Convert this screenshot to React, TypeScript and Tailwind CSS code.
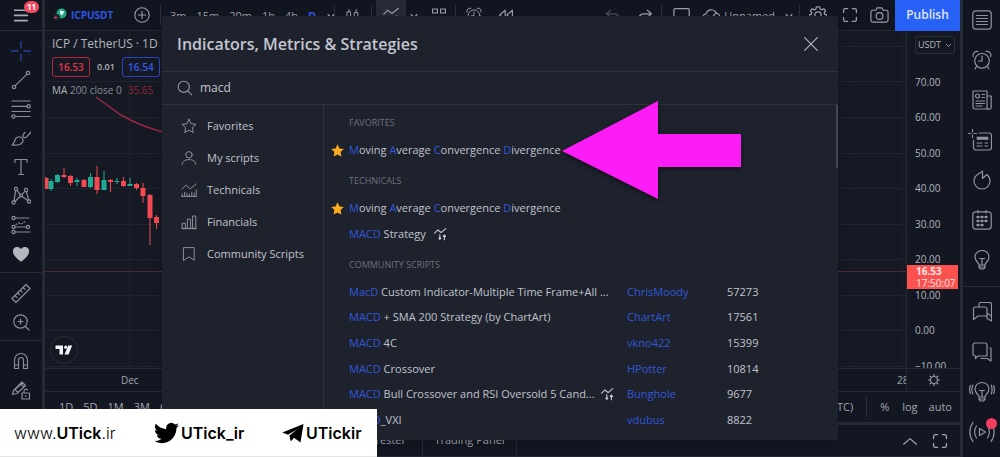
import React from "react";

type IconProps = { size?: number; className?: string; children: React.ReactNode };

function Icon({ size = 20, className = "", children }: IconProps) {
  return (
    <svg
      width={size}
      height={size}
      viewBox="0 0 20 20"
      fill="none"
      stroke="currentColor"
      strokeWidth="1.2"
      strokeLinecap="round"
      strokeLinejoin="round"
      aria-hidden="true"
      className={"shrink-0 " + className}
    >
      {children}
    </svg>
  );
}

const Cross = () => (
  <Icon className="text-[#27409a]">
    <path d="M10 0.5v6.5M10 13v6.5M0.5 10h6.5M13 10h6.5" strokeWidth="1.4" />
  </Icon>
);
const TrendLine = () => (
  <Icon>
    <circle cx="3" cy="17" r="1.7" />
    <circle cx="17" cy="3" r="1.7" />
    <path d="M4.3 15.7L15.7 4.3" />
  </Icon>
);
const FibLines = () => (
  <Icon>
    <path d="M1 2h18M1 7.3h15M1 12.5h18M4.5 17.5H19" />
    <circle cx="17.7" cy="7.3" r="1.6" fill="#11151f" />
    <circle cx="2.5" cy="17.5" r="1.6" fill="#11151f" />
  </Icon>
);
const Brush = () => (
  <Icon>
    <path d="M1 17c2-1.500 2.500-3 3-5 .8-2.500 3.500-4 6-2.800 2 1 2.800 3.500 1.200 5.500C9.500 17 5 17.500 1 17z" />
    <path d="M12 7c-.5 2 1.500 3.500 3.200 2.300L20 4M12.500 6l1.500-1.500" />
  </Icon>
);
const TextTool = () => (
  <Icon>
    <path d="M4 5.500V2.500h12v3M10 2.500v15M7.500 17.500h5" />
  </Icon>
);
const Pattern = () => (
  <Icon>
    <circle cx="5" cy="3" r="1.6" />
    <circle cx="15" cy="4" r="1.600" />
    <circle cx="2.500" cy="16.500" r="1.600" />
    <circle cx="18" cy="15.500" r="1.600" />
    <circle cx="10" cy="9.500" r="1.400" />
    <path d="M4.600 4.700L3 14.800M6 4.400l3 4M14 5.400l-3 3M15.400 5.600l2.200 8.200M4 15.500l5-5M11.200 10.400l5.500 4.200" />
  </Icon>
);
const Forecast = () => (
  <Icon>
    <path d="M4 3h14M4 12h11M4 17h15" />
    <path d="M5 9.500l3-1.500 2 1 5-3" strokeDasharray="1 2" />
    <circle cx="2.500" cy="3" r="1.600" />
    <circle cx="2.500" cy="12" r="1.600" />
    <circle cx="17" cy="12" r="1.600" />
    <circle cx="2.500" cy="17" r="1.600" />
  </Icon>
);
const Heart = () => (
  <Icon className="text-[#b4b7c0]">
    <path
      d="M10 17C6 14 2.500 11 2.500 7.500 2.500 5 4.300 3.500 6.300 3.500 8 3.500 9.300 4.500 10 6c.7-1.500 2-2.500 3.700-2.500 2 0 3.800 1.500 3.800 4C17.500 11 14 14 10 17z"
      fill="currentColor"
    />
  </Icon>
);
const Ruler = () => (
  <Icon>
    <path d="M1 15.500L15 1.500l4 4L5 19.500z" />
    <path d="M4 12.700l1.800 1.800M6.700 10l1.800 1.800M9.400 7.300l1.800 1.800M12.100 4.600l1.800 1.800" />
  </Icon>
);
const ZoomIn = () => (
  <Icon>
    <circle cx="9.500" cy="9.500" r="6.700" />
    <path d="M14.500 14.500l3.500 3.500M9.500 7v5M7 9.500h5" />
  </Icon>
);
const Magnet = () => (
  <Icon>
    <path d="M3.500 17.500V9a6.500 6.500 0 0113 0v8.500h-4V9a2.500 2.500 0 00-5 0v8.500zM3.500 14h4M12.500 14h4" />
  </Icon>
);
const PencilLock = () => (
  <Icon>
    <path d="M1.500 14.500l1-4L11 2l3.500 3.500-8.500 8zM9.500 3.500L13 7M4 9.500l3 3M5 8.500l6-5" />
    <path d="M11 13h7.500v6H11zM13 13v-2a2 2 0 013.500-1.200M14.800 15.500v1" />
  </Icon>
);

const ListIcon = () => (
  <Icon>
    <rect x="0.800" y="0.800" width="18.400" height="18.400" rx="3" />
    <path d="M4.500 5.500h11M4.500 8.500h11M4.500 11.500h11M4.500 14.500h11" />
  </Icon>
);
const Alarm = ({ size = 20 }: { size?: number }) => (
  <Icon size={size}>
    <circle cx="10" cy="10.800" r="7.300" />
    <path d="M10 6v5H6.500M1.200 6.500A4 4 0 016 1.500M18.800 6.500A4 4 0 0014 1.500M4.500 16.500L3 19M15.500 16.500L17 19" />
  </Icon>
);
const News = () => (
  <Icon>
    <path d="M1 1h14v18H3a2 2 0 01-2-2zM15 6h4.200v11.200a2 2 0 01-4.200 0" />
    <circle cx="5.500" cy="6" r="2" />
    <path d="M10 4.500h2.500M10 7.500h2.500M4 11h8.500M4 13.500h8.500M4 16h6" />
  </Icon>
);
const NewList = () => (
  <svg
    width="24"
    height="22"
    viewBox="-4 -2 24 22"
    fill="none"
    stroke="currentColor"
    strokeWidth="1.2"
    strokeLinecap="round"
    aria-hidden="true"
    className="mr-1"
  >
    <path d="M0.500 -1.500v2.500M0.500 4v2.500M-3.500 2.500h2.500M2 2.500h2.500M7 2h10a2.500 2.500 0 012.500 2.500v12A2.500 2.500 0 0117 19H4a2.500 2.500 0 01-2.500-2.500V9" />
    <rect x="5" y="6" width="11" height="2.500" fill="currentColor" strokeWidth="0.600" />
    <path d="M5 12h5M5 15h5M13 12h2.500M13 15h2.500" />
  </svg>
);
const Flame = () => (
  <Icon>
    <path d="M10.500 1v7.500L14.800 4.500C17.300 6.500 18 8.800 18 11A8 8 0 012 11C2 7.500 3.800 5.500 6 4.200 8 3 9.800 2.500 10.500 1z" />
  </Icon>
);
const CalendarIcon = () => (
  <Icon>
    <rect x="0.800" y="1.800" width="18.400" height="17.400" rx="3" />
    <path d="M6 0v3M14 0v3" />
    <path d="M5.500 7h1M9.500 7h1M13.500 7h1M5.500 11h1M9.500 11h1M13.500 11h1M5.500 15h1M9.500 15h1" strokeWidth="2.400" />
  </Icon>
);
const bulbPath =
  "M7 15c0-2.500-4-3.500-4-8a7 6.500 0 0114 0c0 4.500-4 5.500-4 8zM7 15v2.500l1.500 1.500h3l1.500-1.500V15M7 17h6M10 15V9M7.500 8.500h5";
const Bulb = () => (
  <Icon>
    <path d={bulbPath} />
  </Icon>
);
const BulbWaves = () => (
  <svg
    width="26"
    height="22"
    viewBox="-3 -1 26 22"
    fill="none"
    stroke="currentColor"
    strokeWidth="1.2"
    strokeLinecap="round"
    aria-hidden="true"
  >
    <path d={bulbPath} />
    <path d="M0.800 3c-1.200 3-1.200 6 0 9M-1.600 3.500c-1.200 3-1.200 5 0 8M19.200 3c1.200 3 1.200 6 0 9M21.600 3.500c1.200 3 1.200 5 0 8" />
  </svg>
);
const Chats = () => (
  <Icon>
    <path d="M7 5V2.500a2 2 0 012-2h8.500a2 2 0 012 2V14l-4-2.500" />
    <path d="M2.500 5H13a2 2 0 012 2v7H8l-2 0-4.500 3.500V7A2 2 0 012.500 5zM15 14v2.500l4.500 2.500v-5" />
  </Icon>
);
const Chat = () => (
  <Icon>
    <path d="M3 1h10a2 2 0 012 2v11H6l-2.500 2.500V14H3a2 2 0 01-2-2V3a2 2 0 012-2z" />
    <path d="M18 6h1v13l-4-2.500H9" />
  </Icon>
);
const Stream = () => (
  <svg
    width="26"
    height="22"
    viewBox="0 0 26 22"
    fill="none"
    stroke="currentColor"
    strokeWidth="1.2"
    strokeLinecap="round"
    strokeLinejoin="round"
    aria-hidden="true"
  >
    <path d="M10.500 7.500v7l6-3.500zM7.500 5c-2.500 3.500-2.500 8.500 0 12M4 1.500C-.2 7-.2 15 4 20.500M18.500 5c2.500 3.500 2.500 8.500 0 12M22 1.500c4.200 5.500 4.200 13.500 0 19" />
  </svg>
);
const FullScreen = ({ size = 16 }: { size?: number }) => (
  <Icon size={size}>
    <path
      d="M2 7V4a2 2 0 012-2h3M13 2h3a2 2 0 012 2v3M18 13v3a2 2 0 01-2 2h-3M7 18H4a2 2 0 01-2-2v-3"
      strokeWidth="1.600"
    />
  </Icon>
);
const Chevron = ({ size = 10, up = false }: { size?: number; up?: boolean }) => (
  <Icon size={size}>
    <path d={up ? "M2 14l8-7 8 7" : "M4 7l6 6 6-6"} strokeWidth={up ? "1.500" : "2.400"} />
  </Icon>
);
const StrategyIcon = () => (
  <Icon size={13} className="text-[#c9ccd4]">
    <path d="M1 8l5-5 5 4 7-6" strokeWidth="1.700" />
    <path d="M9 10v5M7.500 15.500L9 17.500l1.500-2zM16 18v-6M14.300 13l1.700-2.300 1.700 2.300z" strokeWidth="1.700" />
  </Icon>
);
const GoldStar = () => (
  <svg width="13" height="13" viewBox="0 0 20 20" fill="#ffab1f" aria-hidden="true">
    <path d="M10 0.500l3 6.300 6.700.9-4.900 4.700 1.200 6.900-6-3.300-6 3.300 1.200-6.900L.3 7.700 7 6.800z" />
  </svg>
);

const drawTools = [
  [
    ["Crosshair", Cross],
    ["Trend line", TrendLine],
    ["Fibonacci", FibLines],
    ["Brush", Brush],
    ["Text", TextTool],
    ["Patterns", Pattern],
    ["Forecast", Forecast],
    ["Favourite tools", Heart],
  ],
  [
    ["Measure", Ruler],
    ["Zoom in", ZoomIn],
  ],
  [
    ["Magnet", Magnet],
    ["Lock drawings", PencilLock],
  ],
] as [string, React.ComponentType][][];

function LeftToolbar() {
  return (
    <nav className="w-[45px] shrink-0 border-r-[3px] border-[#262a35] bg-[#11151f] text-[#8b8e98]">
      <div className="flex h-[31px] items-center justify-center border-b border-[#262a35]">
        <button aria-label="Menu" className="relative flex w-full justify-center text-[#a9acb5]">
          <Icon size={16}>
            <path d="M2 4h16M2 10.500h16M2 17h16" strokeWidth="2" />
          </Icon>
          <span className="absolute -top-[6px] left-6 flex h-3 w-[15px] items-center justify-center rounded-full bg-[#ef4a62] text-[8px] leading-[12px] font-bold text-white">
            11
          </span>
        </button>
      </div>
      {drawTools.map((group, i) => (
        <div key={i} className="border-b border-[#262a35] pt-[5px] pb-1 last:border-b-0">
          {group.map(([label, Glyph]) => (
            <button key={label} aria-label={label} className="flex h-[29px] w-full items-center justify-center">
              <Glyph />
            </button>
          ))}
        </div>
      ))}
    </nav>
  );
}

const sideTools = [
  [
    ["Watchlist", ListIcon],
    ["Alerts", Alarm],
    ["News", News],
    ["Data window", NewList],
    ["Hotlists", Flame],
    ["Calendar", CalendarIcon],
    ["My ideas", Bulb],
  ],
  [
    ["Public chats", Chats],
    ["Private chats", Chat],
    ["Ideas stream", BulbWaves],
    ["Streams", Stream],
  ],
] as [string, React.ComponentType][][];

function RightToolbar() {
  return (
    <nav className="w-10 shrink-0 border-l-[3px] border-[#262a35] bg-[#11151f] text-[#9093a0]">
      {sideTools.map((group, i) => (
        <div key={i} className="border-b border-[#262a35] pb-[6px] last:border-b-0 last:pt-[5px] last:pb-0">
          {group.map(([label, Glyph]) => (
            <button key={label} aria-label={label} className="relative flex h-10 w-full items-center justify-center">
              <Glyph />
              {label === "Streams" && (
                <span className="absolute top-[6px] right-[3px] h-[11px] w-[11px] rounded-full bg-[#f23f5f]" />
              )}
            </button>
          ))}
        </div>
      ))}
    </nav>
  );
}

const Divider = () => <span className="h-5 w-px bg-[#2a2e39]" />;

function TopBar() {
  return (
    <header className="flex h-[31px] shrink-0 items-center border-b border-[#262a35] bg-[#11151f] text-[11px] text-[#9a9da7]">
      <button className="flex w-[83px] items-center gap-1 pl-2 text-[10px] font-bold text-[#2f55e8]">
        <svg width="14" height="14" viewBox="0 0 14 14" aria-hidden="true">
          <circle cx="8.500" cy="5.500" r="5" fill="#1fa67f" />
          <path d="M7 2.500l4.500 1-2.500 4-2-2z" fill="#e8f5f0" />
          <circle cx="3.500" cy="9.500" r="3.500" fill="#22242e" />
          <path d="M1 9.500h3" stroke="#d5485e" strokeWidth="1.500" />
        </svg>
        ICPUSDT
      </button>
      <button aria-label="Compare" className="flex w-[27px] justify-center">
        <Icon size={16}>
          <circle cx="10" cy="10" r="9" strokeWidth="1.400" />
          <path d="M10 5.500v9M5.500 10h9" strokeWidth="1.400" />
        </Icon>
      </button>
      <span className="pl-[5px]" />
      <Divider />
      <div className="flex w-[173px] items-center gap-[10px] pt-[2px] pl-[9px]">
        <button>3m</button>
        <button>15m</button>
        <button>20m</button>
        <button>1h</button>
        <button>4h</button>
        <button className="font-bold text-[#2f55e8]">D</button>
        <Chevron />
      </div>
      <Divider />
      <button aria-label="Chart type" className="flex w-9 justify-center">
        <Icon size={16}>
          <path d="M3 6h4v10H3zM5 3v3M5 16v3M12 7h4v7h-4zM14 3v4M14 14v4" />
        </Icon>
      </button>
      <Divider />
      <button aria-label="Indicators" className="ml-1 flex h-full w-[30px] items-center justify-center bg-[#262a35]">
        <Icon size={16}>
          <path d="M1 9l5-5 5 4 8-6M1 17V13M6 17v-5M11 17v-4M17 17v-6" strokeWidth="1.500" />
        </Icon>
      </button>
      <span className="flex w-4 justify-center pt-[2px]">
        <Chevron />
      </span>
      <button aria-label="Templates" className="flex w-[33px] justify-center">
        <Icon size={16}>
          <path d="M2 2.500h6v5H2zM12 2.500h6v5h-6zM2 12h6v5H2zM12 12h6v5h-6z" strokeWidth="1.500" />
        </Icon>
      </button>
      <Divider />
      <button aria-label="Alert" className="flex w-9 justify-center">
        <Alarm size={16} />
      </button>
      <button aria-label="Replay" className="flex w-7 justify-center">
        <Icon size={16}>
          <path d="M9 4l-7 6 7 6zM18 4l-7 6 7 6z" strokeWidth="1.500" />
        </Icon>
      </button>
      <div className="ml-auto flex h-full items-center">
        <button aria-label="Undo" className="flex w-8 justify-center text-[#4a4d58]">
          <Icon size={16}>
            <path d="M7 4L2 8.500 7 13M2 8.500h9c4 0 6 2 7 5" strokeWidth="1.500" />
          </Icon>
        </button>
        <button aria-label="Redo" className="flex w-8 justify-center">
          <Icon size={16}>
            <path d="M13 4l5 4.500-5 4.500M18 8.500H9c-4 0-6 2-7 5" strokeWidth="1.500" />
          </Icon>
        </button>
        <Divider />
        <button aria-label="Layout" className="flex w-10 justify-center">
          <Icon size={18}>
            <rect x="1" y="3" width="17" height="15" rx="1.500" strokeWidth="1.400" />
          </Icon>
        </button>
        <button className="flex items-center gap-1 pt-[2px] text-[11px]">
          <Icon size={18}>
            <path d="M5 16a4 4 0 01-1-8C6 3 12 1 15.500 6M5 16h10a4.500 4.500 0 001-9M7 10l3 3 6-7" strokeWidth="1.300" />
          </Icon>
          Unnamed
          <span className="flex w-5 justify-center">
            <Chevron />
          </span>
        </button>
        <Divider />
        <button aria-label="Settings" className="flex w-9 justify-center">
          <Icon size={18}>
            <path d="M8.200 1h3.600l.6 2.500 1.800.8 2.200-1.300 2 2.500-1.500 2 .6 1.700L20 10v3l-3 1M8.200 1l-.6 2.500-1.800.8L3.600 3l-2 2.500 1.500 2-.6 1.700L0 10v3l3 1" strokeWidth="1.400" />
            <circle cx="10" cy="10" r="3.500" strokeWidth="1.400" />
          </Icon>
        </button>
        <button aria-label="Fullscreen" className="flex w-[27px] justify-center">
          <FullScreen />
        </button>
        <button aria-label="Snapshot" className="flex w-8 justify-center">
          <Icon size={19}>
            <path d="M1 6.500a2 2 0 012-2h3l1.500-2.500h5l1.500 2.500h3a2 2 0 012 2V15a2 2 0 01-2 2H3a2 2 0 01-2-2z" />
            <circle cx="10" cy="10.500" r="3.600" />
          </Icon>
        </button>
        <button className="h-[31px] w-[65px] bg-[#2861f5] text-xs font-semibold text-[#dfe5f8]">Publish</button>
      </div>
    </header>
  );
}

type Candle = [x: number, high: number, open: number, close: number, low: number, up: 0 | 1];

const candles: Candle[] = [
  [1, 146, 147, 158, 158, 0],
  [6, 148, 150, 158, 160, 1],
  [12.5, 143, 144, 151, 152, 1],
  [19, 137, 144, 146, 147, 0],
  [25.5, 144, 145, 152, 155, 0],
  [32, 147, 149, 151, 155, 1],
  [39, 148, 149, 156, 156, 0],
  [45.5, 142, 146, 156, 157, 1],
  [52, 135, 146, 159, 163, 0],
  [59, 140, 149, 159, 159, 1],
  [65.5, 148, 149, 151, 161, 0],
  [72, 147, 150, 151, 153, 1],
  [78.5, 146, 150, 155, 156, 0],
  [85, 147, 153, 155, 155, 1],
  [91.5, 152, 153, 157, 159, 0],
  [98, 152, 157, 165, 172, 0],
  [105, 163, 164, 187, 214, 0],
  [111.5, 184, 186, 192, 198, 0],
];

const gridLevels = [15, 50, 86, 122, 157, 193, 228, 264, 299, 335];
const prices = ["70.00", "60.00", "50.00", "40.00", "30.00", "20.00", "10.00", "0.00", "−10.00"];

function Chart() {
  return (
    <div className="flex min-h-0 grow basis-[337px] overflow-hidden">
      <div className="relative min-w-0 flex-1 overflow-hidden bg-[#151924]">
        <svg width="100%" height="337" aria-hidden="true" className="block">
          {gridLevels.map((y) => (
            <line key={y} x1="0" x2="100%" y1={y + 0.5} y2={y + 0.5} stroke="#20242f" />
          ))}
          <line x1="84.5" x2="84.5" y1="0" y2="337" stroke="#1d212c" />
          <line x1="99.6%" x2="99.6%" y1="0" y2="337" stroke="#1d212c" />
          <line x1="0" x2="100%" y1="240.5" y2="240.5" stroke="#4f2b38" />
          <path d="M51 66L76 84Q95 95 118 101" fill="none" stroke="#95263f" strokeWidth="1.500" />
          {candles.map(([x, high, open, close, low, up]) => (
            <g key={x} fill={up ? "#22ab94" : "#f24a50"}>
              <rect x={x - 0.5} y={high} width="1" height={low - high} />
              <rect x={x - 2.5} y={open} width="5" height={close - open} />
            </g>
          ))}
        </svg>
        <div className="absolute top-0 left-[7px] whitespace-nowrap text-[#b2b5be]">
          <div className="text-[12px] leading-[26px]">ICP / TetherUS · 1D</div>
          <div className="flex h-5 items-center gap-[7px] text-[10px]">
            <button className="h-full w-[38px] rounded-[3px] border border-[#b0283f] font-semibold text-[#e0354b]">
              16.53
            </button>
            <span className="text-[9px] font-semibold">0.01</span>
            <button className="h-full w-[38px] rounded-[3px] border border-[#2a45c4] font-semibold text-[#3558e8]">
              16.54
            </button>
          </div>
          <div className="flex gap-[6px] text-[10px] leading-[26px] text-[#8b8e98]">
            <span>
              <span className="text-[#b2b5be]">MA</span> 200 close 0
            </span>
            <span className="text-[#8f2538]">35.65</span>
          </div>
        </div>
        <div className="absolute bottom-[4px] left-[5px] flex h-7 w-7 items-center justify-center rounded-full border border-[#2a2e39] bg-[#131722]">
          <svg width="18" height="12" viewBox="0 0 18 12" fill="#f4f5f7" aria-hidden="true">
            <path d="M0.500 1.500h7.500v9H4.500V5H0.500zM13.200 1.500h4L13.500 10.500h-4z" />
            <circle cx="10.700" cy="3.200" r="1.600" />
          </svg>
        </div>
      </div>
      <div className="relative w-[54px] shrink-0 overflow-hidden border-l border-[#262a35] bg-[#131722]">
        <div className="grid h-[355px] auto-rows-fr pl-2 text-[10px] leading-[30px] text-[#b2b5be]">
          <div>
            <button className="mt-[5px] flex h-[18px] items-center gap-1 rounded-[3px] border border-[#2a2e39] px-[2px] text-[9px]">
              USDT <Chevron size={7} />
            </button>
          </div>
          {prices.map((p) => (
            <div key={p}>{p}</div>
          ))}
        </div>
        <div className="absolute top-[234px] left-0 w-[51px] bg-[#fb524f] pl-[9px] text-[10px] leading-[12px] text-[#ffe3e1]">
          <div className="font-bold">16.53</div>
          <div>17:50:07</div>
        </div>
      </div>
    </div>
  );
}

function Footer() {
  return (
    <>
      <div className="flex h-[23px] shrink-0 items-center border-t border-[#262a35] bg-[#131722] text-[10px] text-[#a3a6b0]">
        <span className="pl-[76px]">Dec</span>
        <span className="ml-auto w-[9px] overflow-hidden">28</span>
        <span className="flex h-full w-[54px] items-center justify-center border-l border-[#262a35]">
          <Icon size={12}>
            <circle cx="10" cy="10" r="6" strokeWidth="1.600" />
            <path d="M10 1v2M10 17v2M1 10h2M17 10h2M3.600 3.600L5 5M15 15l1.400 1.400M3.600 16.400L5 15M15 5l1.400-1.400" strokeWidth="2" />
          </Icon>
        </span>
      </div>
      <div className="flex h-[31px] shrink-0 items-center border-t border-[#262a35] bg-[#131722] text-[11px] text-[#a3a6b0]">
        <div className="flex gap-[10px] pl-[14px]">
          <button>1D</button>
          <button>5D</button>
          <button>1M</button>
          <button>3M</button>
          <button>6M</button>
        </div>
        <div className="ml-auto flex items-center">
          <span className="pr-[13px]">(UTC)</span>
          <Divider />
          <button className="pl-[13px]">%</button>
          <button className="pl-[13px]">log</button>
          <button className="pr-2 pl-[11px]">auto</button>
        </div>
      </div>
      <div className="flex h-[35px] shrink-0 items-center border-t-[3px] border-b border-[#262a35] bg-[#131722] text-[11px] text-[#a3a6b0]">
        <button className="h-full w-[378px] border-r border-[#262a35] pr-4 text-right">Strategy Tester</button>
        <button className="h-full w-[94px] border-r border-[#262a35]">Trading Panel</button>
        <span className="ml-auto flex items-center gap-[14px] pr-3">
          <Chevron size={16} up />
          <FullScreen size={16} />
        </span>
      </div>
    </>
  );
}

const categories: [string, React.ReactNode][] = [
  ["Favorites", <path key="a" d="M10 1.500l2.600 5.600 6.100.8-4.500 4.200 1.200 6.100L10 15.200l-5.400 3 1.200-6.100L1.300 7.900l6.100-.8z" />],
  [
    "My scripts",
    <g key="b">
      <circle cx="10" cy="6" r="4" />
      <path d="M1.500 18c.8-4.500 4-6 8.500-6s7.700 1.500 8.500 6" />
    </g>,
  ],
  [
    "Technicals",
    <path key="c" d="M1 9l5.500-5 5 4.500L19 2.500M1.500 18v-3M4.500 18v-5M7.500 18v-4M10.500 18v-3M13.500 18v-5M16.500 18v-4M19 18v-8M1 18h18" />,
  ],
  ["Financials", <path key="d" d="M1.500 18v-6.500h4V18zM8 18V6.500h4V18zM14.500 18V2.500h4V18zM1 18h18" />],
  ["Community Scripts", <path key="e" d="M3.500 2h13v16L10 13.500 3.500 18z" />],
];

const Hit = ({ children }: { children: React.ReactNode }) => <span className="text-[#3157d8]">{children}</span>;

const scripts: [string, string, string, string, boolean][] = [
  ["MacD", " Custom Indicator-Multiple Time Frame+All ...", "ChrisMoody", "57273", false],
  ["MACD", " + SMA 200 Strategy (by ChartArt)", "ChartArt", "17561", false],
  ["MACD", " 4C", "vkno422", "15399", false],
  ["MACD", " Crossover", "HPotter", "10814", false],
  ["MACD", " Bull Crossover and RSI Oversold 5 Cand...", "Bunghole", "9677", true],
  ["MACD", "_VXI", "vdubus", "8822", false],
];

const Heading = ({ children }: { children: React.ReactNode }) => (
  <h3 className="mt-1 pl-[25px] text-[9px] leading-[28px] text-[#6d707b]">{children}</h3>
);

const MacdRow = () => (
  <button className="flex h-[26px] w-full items-center">
    <span className="flex w-[25px] justify-start pl-[7px]">
      <GoldStar />
    </span>
    <span>
      <Hit>M</Hit>oving <Hit>A</Hit>verage <Hit>C</Hit>onvergence <Hit>D</Hit>ivergence
    </span>
  </button>
);

function IndicatorDialog() {
  return (
    <section
      role="dialog"
      aria-label="Indicators, Metrics & Strategies"
      className="absolute top-4 right-[162px] left-[162px] rounded-[3px] bg-[#1e222d] text-[11px] text-[#c0c3cc] shadow-lg"
    >
      <div className="flex h-14 items-center justify-between border-b border-[#2f333e] pr-5 pl-[15px]">
        <h2 className="text-base font-semibold text-[#c3c6cf]">Indicators, Metrics &amp; Strategies</h2>
        <button aria-label="Close" className="text-[#b8bbc4]">
          <Icon size={14}>
            <path d="M1 1l18 18M19 1L1 19" strokeWidth="1.600" />
          </Icon>
        </button>
      </div>
      <label className="flex h-[33px] items-center gap-[7px] border-b border-[#2f333e] pl-[15px]">
        <Icon size={16} className="text-[#9093a0]">
          <circle cx="8.500" cy="8.500" r="7" strokeWidth="1.400" />
          <path d="M13.500 13.500l5 5" strokeWidth="1.400" />
        </Icon>
        <input
          aria-label="Search"
          defaultValue="macd"
          className="min-w-0 flex-1 bg-transparent text-[12px] text-[#c3c6cf] outline-none"
        />
      </label>
      <div className="flex">
        <nav className="w-[162px] shrink-0 border-r border-[#2f333e] pt-[5px]">
          {categories.map(([name, glyph]) => (
            <button key={name} className="flex h-8 w-full items-center gap-[10px] pl-[19px]">
              <Icon size={16} className="text-[#9093a0]">
                {glyph}
              </Icon>
              {name}
            </button>
          ))}
        </nav>
        <div className="min-w-0 flex-1 pb-[7px]">
          <Heading>FAVORITES</Heading>
          <MacdRow />
          <Heading>TECHNICALS</Heading>
          <MacdRow />
          <button className="flex h-[26px] w-full items-center gap-2 pl-[25px]">
            <span>
              <Hit>MACD</Hit> Strategy
            </span>
            <StrategyIcon />
          </button>
          <Heading>COMMUNITY SCRIPTS</Heading>
          <table className="h-[154px] w-full table-fixed text-left">
            <tbody>
              {scripts.map(([hit, rest, author, count, strategy]) => (
                <tr key={author}>
                  <td className="py-0 pl-[25px]">
                    <span className="flex items-center gap-[6px] whitespace-nowrap">
                      <span>
                        <Hit>{hit}</Hit>
                        {rest}
                      </span>
                      {strategy && <StrategyIcon />}
                    </span>
                  </td>
                  <td className="w-[100px] py-0">
                    <a href="#author" className="text-[#3157d8]">
                      {author}
                    </a>
                  </td>
                  <td className="w-[109px] py-0">{count}</td>
                </tr>
              ))}
            </tbody>
          </table>
        </div>
        <div className="h-[63px] w-[2px] bg-[#434753]" />
      </div>
    </section>
  );
}

function Banner() {
  return (
    <div className="absolute bottom-0 left-0 flex h-12 w-[377px] items-center border-b border-[#e4e4e4] bg-white font-['Inter',sans-serif] text-[16px] text-black">
      <a href="#site" className="w-[154px] pl-[14px]">
        <span className="font-light">www.</span>
        <span className="font-semibold">UTick</span>
        <span className="font-light">.ir</span>
      </a>
      <a href="#twitter" className="flex w-[128px] items-center gap-[2px] font-semibold">
        <svg width="25" height="22" viewBox="0 2 24 20" fill="currentColor" aria-hidden="true">
          <path d="M23.950 4.570a10 10 0 01-2.820.770 4.960 4.960 0 002.160-2.720c-.95.550-2 .950-3.130 1.180a4.920 4.920 0 00-8.380 4.480C7.690 8.090 4.070 6.130 1.640 3.160a4.820 4.820 0 00-.670 2.480c0 1.710.870 3.210 2.190 4.100a4.900 4.900 0 01-2.230-.620v.060a4.920 4.920 0 003.950 4.830 5 5 0 01-2.210.080 4.940 4.940 0 004.600 3.420A9.870 9.870 0 010 19.540a13.990 13.990 0 007.550 2.210c9.050 0 14-7.500 14-13.980 0-.210 0-.420-.020-.630a9.940 9.940 0 002.460-2.550z" />
        </svg>
        UTick_ir
      </a>
      <a href="#telegram" className="flex items-center gap-[2px] font-semibold">
        <svg width="22" height="20" viewBox="0 0 22 20" fill="currentColor" aria-hidden="true">
          <path d="M0.300 9.500L21.500 1 18.500 19.500 12 14.800 9 18.200 7.500 12.800 17.500 5 6 11.800z" />
          <path d="M7.500 12.800L18.500 3.500 9 14.500v3.700z" />
        </svg>
        UTickir
      </a>
    </div>
  );
}

export default function App() {
  return (
    <main className="relative flex min-h-screen overflow-hidden bg-[#131722] font-['Open_Sans','Noto_Sans',sans-serif]">
      <LeftToolbar />
      <div className="flex min-w-0 flex-1 flex-col">
        <TopBar />
        <Chart />
        <Footer />
      </div>
      <RightToolbar />
      <IndicatorDialog />
      <svg
        width="182"
        height="104"
        viewBox="0 0 182 104"
        aria-hidden="true"
        className="absolute top-[97px] left-[561px] drop-shadow-[0_2px_2px_rgba(0,0,0,0.5)]"
      >
        <path d="M1 54L97 4v33h83v33H97v32z" fill="#fc1cf6" />
      </svg>
      <Banner />
    </main>
  );
}
